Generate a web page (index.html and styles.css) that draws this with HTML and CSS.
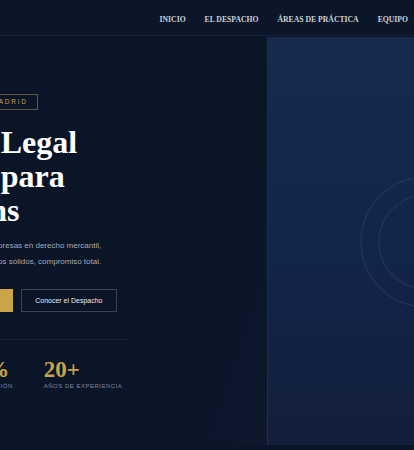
FILE: index.html
```html
<!DOCTYPE html>
<html lang="es">
<head>
<meta charset="utf-8">
<title>Despacho de Abogados · Madrid</title>
<link rel="stylesheet" href="styles.css">
</head>
<body>
<header class="topbar">
  <nav class="nav">
    <a href="#">INICIO</a>
    <a href="#">EL DESPACHO</a>
    <a href="#">ÁREAS DE PRÁCTICA</a>
    <a href="#">EQUIPO</a>
  </nav>
</header>
<main class="hero">
  <div class="hero-text">
    <span class="badge">DESPACHO DE ABOGADOS · MADRID</span>
    <h1 class="title">Excelencia Legal<br>Inteligente para<br>Companions</h1>
    <p class="lead">Acompañamos a startups y a grandes empresas en derecho mercantil,<br>civil, fiscal, tributario, laboral, con resultados sólidos, compromiso total.</p>
    <div class="actions">
      <a class="btn btn-gold" href="#">Solicitar una Consulta Gratuita
        <svg class="arrow" width="8" height="8" viewBox="0 0 8 8" aria-hidden="true"><path d="M1 4h6M4.5 1.5 7 4 4.5 6.5" fill="none" stroke="#0b1528" stroke-width="1.2"/></svg>
      </a>
      <a class="btn btn-outline" href="#">Conocer el Despacho</a>
    </div>
    <div class="stats">
      <div class="stat"><div class="num">500+</div><div class="label">Clientes asesorados</div></div>
      <div class="stat"><div class="num">98%</div><div class="label">Satisfacción</div></div>
      <div class="stat"><div class="num">20+</div><div class="label">Años de experiencia</div></div>
    </div>
  </div>
  <div class="hero-visual">
    <svg class="rings" width="140" height="140" viewBox="0 0 140 140" aria-hidden="true">
      <circle cx="70" cy="70" r="65" fill="none" stroke="#203255" stroke-width="1.5"/>
      <circle cx="70" cy="70" r="47" fill="none" stroke="#203255" stroke-width="1.5"/>
    </svg>
  </div>
</main>
</body>
</html>
```
FILE: styles.css
```css
html, body {
  margin: 0;
  padding: 0;
}
body {
  width: 414px;
  height: 450px;
  overflow: hidden;
  background: #0b1528;
  font-family: "Liberation Sans", Arial, sans-serif;
}
.topbar {
  height: 36px;
  box-sizing: border-box;
  border-bottom: 1px solid #152038;
  background: #0c1629;
  display: flex;
  justify-content: flex-end;
  align-items: center;
  padding: 3px 6px 0 0;
}
.nav {
  display: flex;
  gap: 19px;
}
.nav a {
  font-family: "Liberation Serif", "Times New Roman", serif;
  font-weight: 700;
  font-size: 7.7px;
  color: #ccd1da;
  text-decoration: none;
  white-space: nowrap;
}
.hero {
  display: flex;
  height: 408px;
  margin-top: 1px;
  background: linear-gradient(108deg, rgba(0,0,0,0) 55%, rgba(28,46,84,0.25) 100%);
}
.hero-text {
  flex: 0 0 280px;
  min-width: 0;
  margin-left: -150px;
  padding-top: 57px;
  box-sizing: border-box;
  display: flex;
  flex-direction: column;
  align-items: flex-start;
}
.badge {
  display: block;
  border: 1px solid rgba(201, 164, 73, 0.45);
  padding: 3px 9px;
  font-size: 6.5px;
  line-height: 8px;
  letter-spacing: 1.75px;
  color: #c9a449;
  white-space: nowrap;
}
.title {
  margin: 15px 0 0 -3px;
  font-family: "Liberation Serif", "Times New Roman", serif;
  font-weight: 700;
  font-size: 32px;
  line-height: 34px;
  color: #ffffff;
  white-space: nowrap;
}
.lead {
  margin: 11px 0 0;
  font-size: 8px;
  line-height: 16px;
  color: #a2aaba;
  white-space: nowrap;
}
.actions {
  display: flex;
  gap: 8px;
  margin-top: 19px;
}
.btn {
  display: flex;
  align-items: center;
  gap: 6px;
  font-size: 7px;
  line-height: 21px;
  padding: 0 13.5px;
  text-decoration: none;
  white-space: nowrap;
  border: 1px solid transparent;
}
.btn-gold {
  background: #c9a449;
  border-color: #c9a449;
  color: #0b1528;
  font-weight: 700;
  padding: 0 22px;
}
.btn-outline {
  border-color: #3a4459;
  color: #e8eaf0;
}
.arrow {
  display: block;
}
.stats {
  align-self: stretch;
  margin-top: 27px;
  border-top: 1px solid #18233a;
  padding-top: 20px;
  display: flex;
  gap: 31px;
}
.num {
  font-family: "Liberation Serif", "Times New Roman", serif;
  font-weight: 700;
  font-size: 23px;
  line-height: 20px;
  color: #c9a449;
  white-space: nowrap;
}
.label {
  margin-top: 2px;
  font-size: 6px;
  line-height: 8px;
  letter-spacing: 0.5px;
  text-transform: uppercase;
  color: #7f8898;
  white-space: nowrap;
}
.hero-visual {
  flex: 0 0 316px;
  margin-left: 137px;
  box-sizing: border-box;
  border-left: 1px solid #1d2f55;
  border-top: 1px solid #1a2b4e;
  background: linear-gradient(180deg, #162a4e 0%, #13244a 55%, #121e3b 100%);
  display: flex;
  align-items: center;
  justify-content: center;
}
.rings {
  display: block;
}
```
